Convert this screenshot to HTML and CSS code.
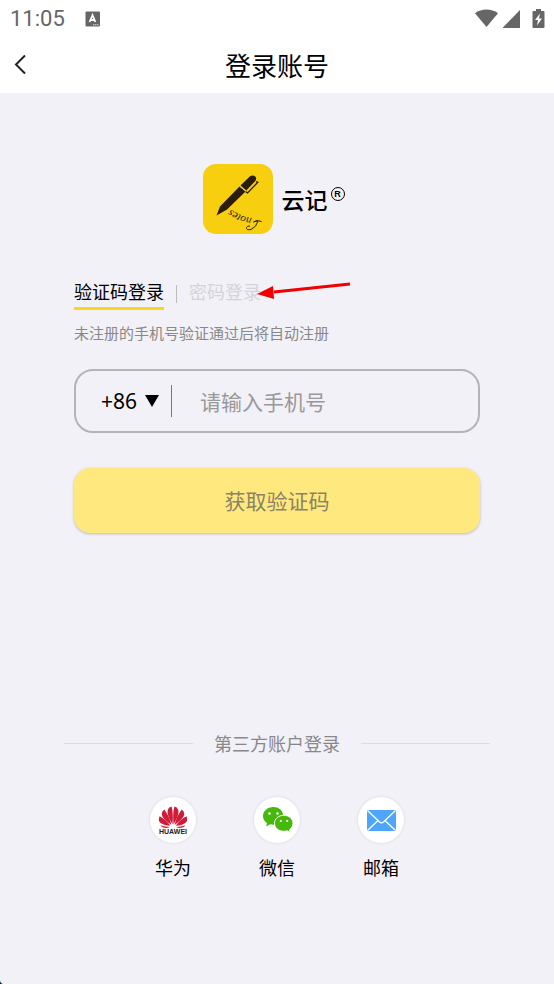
FILE: index.html
```html
<!DOCTYPE html>
<html lang="zh-CN">
<head>
<meta charset="utf-8">
<meta name="viewport" content="width=device-width, initial-scale=1">
<title>登录账号</title>
<link rel="stylesheet" href="styles.css">
</head>
<body>
<div class="status">
  <span class="clock">11:05</span>
  <svg class="keyboard" width="16" height="16" viewBox="0 0 16 16" aria-hidden="true">
    <rect x="0.5" y="0.5" width="14.5" height="15" rx="1" fill="#666"/>
    <path d="M4.600 11 7.500 4 10.400 11M5.600 9h3.800" fill="none" stroke="#fff" stroke-width="1.800"/>
    <path d="M8 13.800h6" stroke="#ddd" stroke-width="1" stroke-dasharray="1.400 .5"/>
  </svg>
  <svg class="signals" width="72" height="22" viewBox="0 0 72 22" fill="#666" aria-hidden="true">
    <path d="M1 5.200C7.500.2 17.500.2 24 5.200L12.500 19z"/>
    <path d="M46 2v18H28.500z"/>
    <path d="M62 1h5v2h2.500a1 1 0 0 1 1 1v15a1 1 0 0 1-1 1h-10a1 1 0 0 1-1-1V4a1 1 0 0 1 1-1H62z"/>
    <path d="M66 5.500 61 12h3l-1 5.500 5-7h-3z" fill="#fff"/>
  </svg>
</div>
<header class="header">
  <button class="back" type="button" aria-label="返回">
    <svg width="12" height="22" viewBox="0 0 12 22"><path d="M11 1.500 2 10.500l9 9" fill="none" stroke="#222" stroke-width="2"/></svg>
  </button>
  <h1>登录账号</h1>
</header>
<main class="main">
  <div class="brand">
    <svg class="logo" width="70" height="70" viewBox="0 0 70 70" role="img" aria-label="云记">
      <rect width="70" height="70" rx="13" fill="#f7cf0f"/>
      <g fill="#2a1c10">
        <path d="M13.500 51.500 17 42.500 36.500 22.500 42.500 27.500 24 45.500z"/>
        <path d="M37.500 21.500 47 12.300Q50 10.300 52.500 12.700 54 15 52 17.300L43.300 26.500z"/>
        <path d="M53 17.500 54.800 18.300 44.500 29 42.500 27.500" fill="none" stroke="#2a1c10" stroke-width="1.300"/>
        <path d="m36.500 22 6.300 5.200" stroke="#d6c492" stroke-width="1"/>
        <path id="curve" d="M49 54Q35 52 24 42" fill="none"/>
        <text class="script"><textPath href="#curve">notes</textPath></text>
        <path d="M58.500 57.500Q54 55.500 50.500 58 53 56.500 55 57 53.500 63 48 65.500 43 66.500 43.500 63.500 44.500 61.500 47 62" fill="none" stroke="#2a1c10" stroke-width="1"/>
      </g>
    </svg>
    <strong>云记</strong>
    <span class="mark">R</span>
  </div>
  <form class="form">
    <div class="tabs">
      <button class="tab active" type="button">验证码登录</button>
      <button class="tab" type="button">密码登录</button>
      <svg class="pointer" width="96" height="20" viewBox="0 0 96 20" aria-hidden="true">
        <path d="M94 2 18 10" stroke="#f00000" stroke-width="3"/>
        <path d="M1 12 17 4 18 17z" fill="#f00000"/>
      </svg>
    </div>
    <p class="hint">未注册的手机号验证通过后将自动注册</p>
    <div class="phone">
      <div class="code">
        <select aria-label="国家或地区代码"><option>+86</option></select>
        <svg width="14" height="12" viewBox="0 0 14 12" aria-hidden="true"><path d="M0 0h14L7 12z"/></svg>
      </div>
      <input type="tel" placeholder="请输入手机号" aria-label="手机号">
    </div>
    <button class="submit" type="button">获取验证码</button>
  </form>
  <section class="third">
    <h2>第三方账户登录</h2>
    <div class="accounts">
      <button type="button">
        <svg width="46" height="46" viewBox="1 1 46 46" aria-hidden="true">
          <defs>
            <g id="petals">
              <path d="M23.500 28.500C20 22.500 17.800 17.500 18.800 13.700Q19.800 11 22.600 10.500 24.500 17 23.500 28.500z"/>
              <path d="M22.300 29C16.500 24.500 12.500 21 12.800 17.500Q13 14.800 15.300 13.500C18.500 18 21.300 23 22.300 29z"/>
              <path d="M21.200 29.800C15 29.300 10.600 27.500 9.900 24.500Q9.500 22 10.700 20.200C15 22.500 19 26 21.200 29.800z"/>
              <path d="M20.800 31C18 32.500 13.500 32.200 11.500 29.300 15 30.600 18 30.900 20.800 31z"/>
            </g>
          </defs>
          <g fill="#cf1c39">
            <use href="#petals"/>
            <use href="#petals" transform="matrix(-1 0 0 1 48 0)"/>
          </g>
          <text class="maker" x="24" y="38">HUAWEI</text>
        </svg>
        <span>华为</span>
      </button>
      <button type="button">
        <svg width="46" height="46" viewBox="1 1 46 46" aria-hidden="true">
          <g fill="#45b80b">
            <path d="M20.500 11C14.500 11 10 15 10 20c0 3 1.500 5.500 4 7l-.8 3.500 4-2.200q5 1.200 9-1.300C33 23 31 11 20.500 11z"/>
            <path d="M30.800 19.300c-5.300 0-9.300 3.500-9.300 8s4 8 9.300 8q1.700 0 3.200-.5l3.200 1.700-.6-2.800c2.200-1.500 3.400-3.800 3.400-6.400 0-4.500-4-8-9.200-8z" stroke="#fff" stroke-width="1"/>
          </g>
          <g fill="#fff"><circle cx="16.500" cy="17.500" r="1.300"/><circle cx="24.500" cy="17.500" r="1.300"/><circle cx="27.800" cy="25" r="1.100"/><circle cx="34.200" cy="25" r="1.100"/></g>
        </svg>
        <span>微信</span>
      </button>
      <button type="button">
        <svg width="46" height="46" viewBox="1 1 46 46" aria-hidden="true">
          <rect x="10" y="14" width="29" height="21" rx="1" fill="#4fa5fc"/>
          <path d="m10.500 14.500 12 11.500q2 1.600 4 0l12-11.500M10.500 34.500l10.500-10m17.500 10L28 24.500" fill="none" stroke="#fff" stroke-width="1.300"/>
        </svg>
        <span>邮箱</span>
      </button>
    </div>
  </section>
</main>
<svg class="corner" width="3" height="4" viewBox="0 0 3 4" aria-hidden="true"><path d="M0 0Q0 3 3 4H0z" fill="#062b40"/></svg>
</body>
</html>
```

FILE: styles.css
```css
* { box-sizing: border-box; }

body {
  margin: 0;
  min-height: 100vh;
  background: #f2f1f8;
  color: #000;
  font-family: "Noto Sans CJK SC", sans-serif;
}

button, input, select {
  margin: 0;
  padding: 0;
  border: 0;
  background: none;
  color: inherit;
  font: inherit;
}

button { cursor: pointer; }
svg { display: block; }

.status {
  display: flex;
  align-items: center;
  height: 38px;
  padding: 0 8px 0 10px;
  background: #fff;
}

.clock {
  color: #666;
  font: 400 22px/24px Roboto, sans-serif;
}

.keyboard { margin-left: 20px; }
.signals { margin-left: auto; }

.header {
  display: grid;
  grid-template-columns: 40px 1fr 40px;
  align-items: center;
  height: 55px;
  padding-bottom: 2px;
  background: #fff;
}

.back { padding: 4px 14px; }

h1 {
  margin: 0;
  font-size: 26px;
  font-weight: 400;
  line-height: 36px;
  text-align: center;
}

.main { padding: 71px 64px 0; }

.brand {
  display: flex;
  align-items: center;
  justify-content: center;
  padding-right: 7px;
}

.brand strong {
  margin-left: 9px;
  font-size: 23px;
  font-weight: 500;
  line-height: 32px;
}

.script {
  font: italic 11px "Liberation Serif", serif;
}

.mark {
  width: 14px;
  height: 14px;
  margin: 0 0 10px 3px;
  border: 1px solid #000;
  border-radius: 50%;
  font: 700 9px/12px "Liberation Sans", sans-serif;
  text-align: center;
}

.form { padding: 0 10px; }

.tabs {
  position: relative;
  display: flex;
  width: max-content;
  margin-top: 44px;
}

.tab {
  padding: 1px 0 3px;
  border-bottom: 3px solid transparent;
  color: #d4d4d8;
  font-size: 18px;
  line-height: 25px;
}

.tab.active {
  border-color: #f9d71c;
  color: #000;
}

.tab + .tab::before {
  content: "";
  display: inline-block;
  width: 1px;
  height: 18px;
  margin: 0 12px;
  background: #bbb;
  vertical-align: -4px;
}

.pointer {
  position: absolute;
  top: 4px;
  left: 182px;
}

.hint {
  margin: 12px 0 0;
  color: #888;
  font-size: 15px;
  line-height: 22px;
}

.phone {
  display: flex;
  align-items: center;
  height: 64px;
  margin-top: 25px;
  border: 2px solid #b4b3b9;
  border-radius: 19px;
  font-size: 21px;
}

.code {
  display: flex;
  align-items: center;
  gap: 7px;
  height: 32px;
  padding: 0 12px 0 25px;
  border-right: 1px solid #777;
}

.code select {
  width: 37px;
  appearance: none;
  font-family: "Noto Sans", sans-serif;
  line-height: 30px;
}

.phone input {
  flex: 1;
  min-width: 0;
  padding: 0 12px 1px 28px;
  line-height: 30px;
  outline: 0;
}

.phone input::placeholder { color: #999; }

.submit {
  width: 100%;
  height: 65px;
  margin-top: 35px;
  padding-bottom: 2px;
  border-radius: 16px;
  background: #ffe97f;
  box-shadow: 0 1px 3px #bbb;
  color: #8c8266;
  font-size: 21px;
}

.third { margin-top: 197px; }

h2 {
  display: flex;
  align-items: center;
  gap: 21px;
  margin: 0;
  color: #888;
  font-size: 18px;
  font-weight: 400;
  line-height: 26px;
}

h2::before, h2::after {
  content: "";
  flex: 1;
  height: 1px;
  background: #dddce2;
}

.accounts {
  display: flex;
  justify-content: center;
  gap: 58px;
  margin-top: 41px;
}

.accounts button {
  display: grid;
  gap: 11px;
  justify-items: center;
  font-size: 18px;
  line-height: 26px;
}

.accounts svg {
  border-radius: 50%;
  background: #fff;
  box-shadow: 0 0 3px #d5d4da;
}

.maker {
  fill: #222;
  font: 700 7px "Liberation Sans", sans-serif;
  text-anchor: middle;
}

.corner {
  position: fixed;
  bottom: 0;
  left: 0;
}
```
